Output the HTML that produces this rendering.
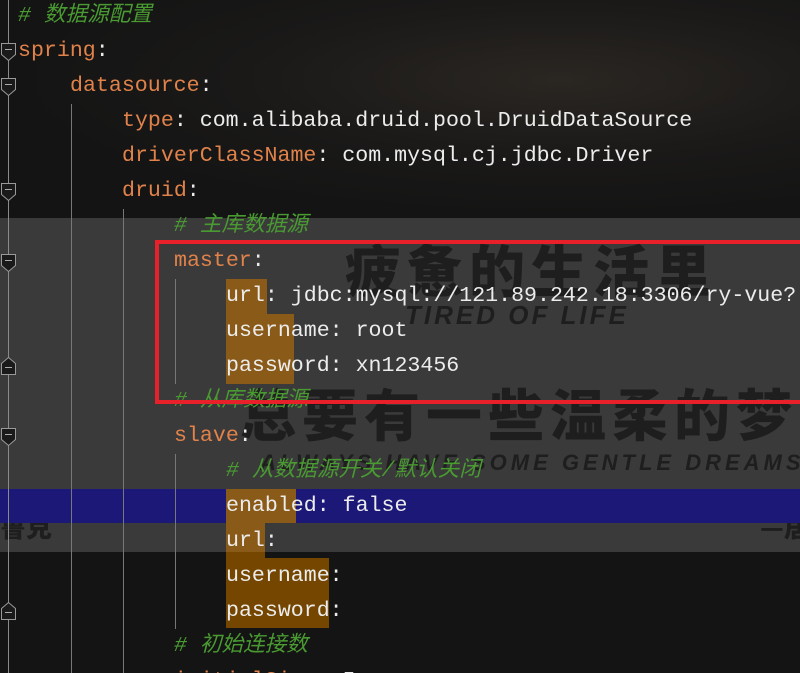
<!DOCTYPE html>
<html style="width:800px;height:673px;overflow:hidden"><head><meta charset="utf-8"><style>
*{margin:0;padding:0}
body{width:800px;height:673px;overflow:hidden;background:#151515;position:relative;font-family:"Liberation Mono","Noto Sans CJK SC",monospace;font-size:21.6px}
.abs{position:absolute}
.ln{position:absolute;left:0;height:35px;line-height:35px;white-space:pre;color:#ececec}
.k{color:#e0824a}
.c{color:#4a9a32;font-style:italic;font-family:"Liberation Mono","Noto Sans CJK SC",monospace}
.wm{position:absolute;font-family:"Noto Sans CJK SC",sans-serif;font-weight:900;color:#1e1e1e;white-space:nowrap}
</style></head><body>
<div class="abs" style="left:0;top:0;width:800px;height:218px;background:radial-gradient(ellipse at 560px 80px,#2a2622 0,#1a1918 40%,#141414 70%)"></div>
<div class="abs" style="left:0;top:218px;width:800px;height:334px;background:#3a3a3b"></div>
<div class="abs" style="left:0;top:552px;width:800px;height:121px;background:#141414"></div>
<div class="wm" style="left:345px;top:228px;font-size:56px;letter-spacing:6px">疲惫的生活里</div>
<div class="wm" style="left:405px;top:300px;font-size:26px;font-style:italic;font-family:'Liberation Sans',sans-serif;letter-spacing:3px">TIRED OF LIFE</div>
<div class="wm" style="left:240px;top:372px;font-size:56px;letter-spacing:6px">总要有一些温柔的梦</div>
<div class="wm" style="left:260px;top:450px;font-size:22px;font-style:italic;font-family:'Liberation Sans',sans-serif;letter-spacing:4px">ALWAYS HAVE SOME GENTLE DREAMS</div>
<div class="wm" style="left:0;top:508px;font-size:26px">鲁克</div>
<div class="wm" style="left:760px;top:508px;font-size:26px">—居</div>
<div class="abs" style="left:0;top:489px;width:800px;height:34px;background:#1c1878"></div>
<div class="abs" style="left:226px;top:279px;width:41px;height:35px;background:#8a5a18"></div>
<div class="abs" style="left:226px;top:314px;width:68px;height:70px;background:#8a5a18"></div>
<div class="abs" style="left:226px;top:489px;width:70px;height:34px;background:#8a5a18"></div>
<div class="abs" style="left:226px;top:523px;width:39px;height:29px;background:#8a5a18"></div>
<div class="abs" style="left:226px;top:552px;width:39px;height:6px;background:#744600"></div>
<div class="abs" style="left:226px;top:558px;width:103px;height:70px;background:#744600"></div>
<div class="abs" style="left:8px;top:0;width:1px;height:673px;background:#8a8a8a"></div>
<div class="abs" style="left:71px;top:104px;width:1px;height:569px;background:#777"></div>
<div class="abs" style="left:123px;top:209px;width:1px;height:464px;background:#777"></div>
<div class="abs" style="left:175px;top:279px;width:1px;height:105px;background:#777"></div>
<div class="abs" style="left:175px;top:454px;width:1px;height:175px;background:#777"></div>
<svg class="abs" style="left:0;top:0" width="20" height="673">
<g fill="#1a1a1a" stroke="#999" stroke-width="1">
<path d="M1.5 43.5h14v11l-7 6l-7-6z"/><path d="M1.5 78.5h14v11l-7 6l-7-6z"/><path d="M1.5 183.5h14v11l-7 6l-7-6z"/><path d="M1.5 254.5h14v11l-7 6l-7-6z"/><path d="M1.5 428.5h14v11l-7 6l-7-6z"/>
<path d="M1.5 374.5h14v-11l-7-6l-7 6z"/><path d="M1.5 619.5h14v-11l-7-6l-7 6z"/>
</g>
<g stroke="#aaa"><path d="M5 49.5h7M5 84.5h7M5 189.5h7M5 260.5h7M5 434.5h7M5 367.5h7M5 612.5h7"/></g>
</svg>
<div class="ln" style="top:-1px;left:18px"><span class="c"># 数据源配置</span></div>
<div class="ln" style="top:34px;left:18px"><span class="k">spring</span>:</div>
<div class="ln" style="top:69px;left:70px"><span class="k">datasource</span>:</div>
<div class="ln" style="top:104px;left:122px"><span class="k">type</span>: com.alibaba.druid.pool.DruidDataSource</div>
<div class="ln" style="top:139px;left:122px"><span class="k">driverClassName</span>: com.mysql.cj.jdbc.Driver</div>
<div class="ln" style="top:174px;left:122px"><span class="k">druid</span>:</div>
<div class="ln" style="top:209px;left:174px"><span class="c"># 主库数据源</span></div>
<div class="ln" style="top:244px;left:174px"><span class="k">master</span>:</div>
<div class="ln" style="top:279px;left:226px">url: jdbc:mysql://121.89.242.18:3306/ry-vue?</div>
<div class="ln" style="top:314px;left:226px">username: root</div>
<div class="ln" style="top:349px;left:226px">password: xn123456</div>
<div class="ln" style="top:384px;left:174px"><span class="c"># 从库数据源</span></div>
<div class="ln" style="top:419px;left:174px"><span class="k">slave</span>:</div>
<div class="ln" style="top:454px;left:226px"><span class="c"># 从数据源开关/默认关闭</span></div>
<div class="ln" style="top:489px;left:226px">enabled: false</div>
<div class="ln" style="top:524px;left:226px">url:</div>
<div class="ln" style="top:559px;left:226px">username:</div>
<div class="ln" style="top:594px;left:226px">password:</div>
<div class="ln" style="top:629px;left:174px"><span class="c"># 初始连接数</span></div>
<div class="ln" style="top:664px;left:174px;height:9px;overflow:hidden"><span class="k">initialSize</span>: 5</div>
<div class="abs" style="left:155px;top:240px;width:645px;height:164px;border:4px solid #e8202a;border-right:none;box-sizing:border-box"></div>
</body></html>
